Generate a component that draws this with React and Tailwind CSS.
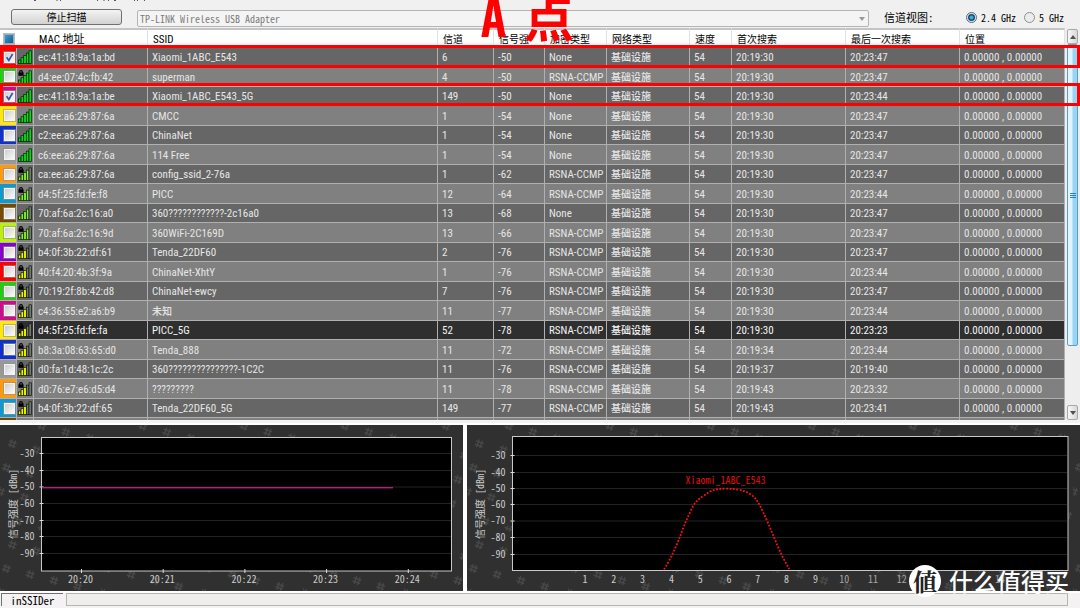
import { useState } from "react";

const columns = [
  { key: "mac", label: "MAC 地址", width: "w-[114px]", size: "text-[11px]" },
  { key: "ssid", label: "SSID", width: "w-[290px]", size: "text-[11px]" },
  { key: "channel", label: "信道", width: "w-[56px]" },
  { key: "rssi", label: "信号强", width: "w-[51px]" },
  { key: "security", label: "加密类型", width: "w-[62px]" },
  { key: "type", label: "网络类型", width: "w-[83px]" },
  { key: "speed", label: "速度", width: "w-[42px]" },
  { key: "first", label: "首次搜索", width: "w-[114px]" },
  { key: "last", label: "最后一次搜索", width: "w-[114px]" },
  { key: "location", label: "位置", width: "w-[105px]" },
];

// color, mac, ssid, channel, rssi, secured, first seen, last seen
const networks = [
  ["bg-[#ff0000]", "ec:41:18:9a:1a:bd", "Xiaomi_1ABC_E543", 6, -50, false, "20:19:30", "20:23:47"],
  ["bg-[#22cc11]", "d4:ee:07:4c:fb:42", "superman", 4, -50, true, "20:19:30", "20:23:47"],
  ["bg-[#cc0c8c]", "ec:41:18:9a:1a:be", "Xiaomi_1ABC_E543_5G", 149, -50, false, "20:19:30", "20:23:44"],
  ["bg-[#ffe60c]", "ce:ee:a6:29:87:6a", "CMCC", 1, -54, false, "20:19:30", "20:23:47"],
  ["bg-[#1130cc]", "c2:ee:a6:29:87:6a", "ChinaNet", 1, -54, false, "20:19:30", "20:23:47"],
  ["bg-[#999999]", "c6:ee:a6:29:87:6a", "114 Free", 1, -54, false, "20:19:30", "20:23:47"],
  ["bg-[#ff9911]", "ca:ee:a6:29:87:6a", "config_ssid_2-76a", 1, -62, true, "20:19:30", "20:23:47"],
  ["bg-[#1199cc]", "d4:5f:25:fd:fe:f8", "PICC", 12, -64, true, "20:19:30", "20:23:44"],
  ["bg-[#774a00]", "70:af:6a:2c:16:a0", "360????????????-2c16a0", 13, -68, false, "20:19:30", "20:23:47"],
  ["bg-[#bbee11]", "70:af:6a:2c:16:9d", "360WiFi-2C169D", 13, -66, true, "20:19:30", "20:23:47"],
  ["bg-[#8800cc]", "b4:0f:3b:22:df:61", "Tenda_22DF60", 2, -76, true, "20:19:30", "20:23:47"],
  ["bg-[#ff0000]", "40:f4:20:4b:3f:9a", "ChinaNet-XhtY", 1, -76, true, "20:19:30", "20:23:44"],
  ["bg-[#22cc11]", "70:19:2f:8b:42:d8", "ChinaNet-ewcy", 7, -76, true, "20:19:30", "20:23:47"],
  ["bg-[#cc0c8c]", "c4:36:55:e2:a6:b9", "未知", 11, -77, true, "20:19:30", "20:23:44"],
  ["bg-[#ffe60c]", "d4:5f:25:fd:fe:fa", "PICC_5G", 52, -78, true, "20:19:30", "20:23:23"],
  ["bg-[#1130cc]", "b8:3a:08:63:65:d0", "Tenda_888", 11, -72, true, "20:19:34", "20:23:44"],
  ["bg-[#999999]", "d0:fa:1d:48:1c:2c", "360???????????????-1C2C", 11, -76, true, "20:19:37", "20:19:40"],
  ["bg-[#ff9911]", "d0:76:e7:e6:d5:d4", "?????????", 11, -78, true, "20:19:43", "20:23:32"],
  ["bg-[#1199cc]", "b4:0f:3b:22:df:65", "Tenda_22DF60_5G", 149, -77, true, "20:19:43", "20:23:41"],
].map(([color, mac, ssid, channel, rssi, secured, first, last]) => ({
  color,
  mac,
  ssid,
  channel,
  rssi,
  secured,
  security: secured ? "RSNA-CCMP" : "None",
  type: "基础设施",
  speed: 54,
  first,
  last,
  location: "0.00000 , 0.00000",
}));

const cell = "border-r border-b border-[#b0b0b0] p-0";

function SignalIcon({ rssi, secured }) {
  const level = rssi >= -60 ? 5 : rssi >= -70 ? 4 : 3;
  const color = rssi >= -60 ? "#00dd11" : rssi >= -70 ? "#88ee22" : "#f4f400";
  return (
    <svg viewBox="0 0 14 14" className="mx-auto block h-[14px] w-[14px]" aria-hidden="true">
      {[0, 1, 2, 3, 4].map((i) => {
        const height = 3.4 + i * 2.3;
        return (
          <rect
            key={i}
            x={0.4 + i * 2.65}
            y={13.4 - height}
            width="2.6"
            height={height}
            fill={i < level ? color : "#777777"}
            stroke="#0a1a0a"
            strokeWidth="0.7"
          />
        );
      })}
      {secured && (
        <g>
          <path d="M1.6 3V2a1.4 1.4 0 0 1 2.8 0v1" fill="none" stroke="#000" strokeWidth="1.1" />
          <rect x="0.4" y="2.4" width="5.2" height="3.4" fill="#000" />
        </g>
      )}
    </svg>
  );
}

function RowCheckbox({ label, checked, onChange }) {
  return (
    <label className="relative ml-1 block h-[11px] w-[11px]">
      <input
        type="checkbox"
        aria-label={label}
        checked={checked}
        onChange={onChange}
        className="block h-[11px] w-[11px] appearance-none border border-[#f4f4f4] bg-linear-to-br from-[#cfcfcf] to-[#fafafa] outline outline-[#8e8f8f]/60"
      />
      {checked && (
        <svg viewBox="0 0 11 11" className="pointer-events-none absolute inset-0" aria-hidden="true">
          <path d="M2.6 5.2 4.8 8.4 8.6 2" fill="none" stroke="#3a4fa8" strokeWidth="1.6" />
        </svg>
      )}
    </label>
  );
}

function Toolbar() {
  const [band, setBand] = useState("2.4");
  const radio =
    "h-[11px] w-[11px] appearance-none rounded-full border border-[#8e8f8f] bg-[#ececec] checked:border-[#5a6b78] checked:bg-radial checked:from-[#35b0e8] checked:from-20% checked:via-[#123a5c] checked:via-45% checked:to-[#e4edf3] checked:to-65%";
  return (
    <header className="relative flex h-7 items-end bg-[#f0f0f0] pr-4 pl-[11px]">
      <svg viewBox="0 0 120 2" className="absolute top-0 left-[30px] h-[2px] w-[120px]" aria-hidden="true">
        <path d="M4 .5h2M26.500 .5h1M30 .5h1M67 .5h1M73.500 .5h1M78 .5h1M84 .5h2M104 .5h1M107 .5h1M114 .5h1" stroke="#555555" />
      </svg>
      <button
        type="button"
        className="mb-[3px] h-4 w-[111px] rounded-[3px] border border-[#707070] bg-linear-to-b from-[#f4f4f4] to-[#d2d2d2] text-[10px] leading-3 text-black"
      >
        停止扫描
      </button>
      <div className="relative mb-[1px] ml-[15px] grow">
        <select
          aria-label="Adapter"
          disabled
          className="block h-[17px] w-full appearance-none rounded-[2px] border border-[#b4b4b4] bg-[#f4f4f4] px-[2px] font-['Noto_Sans_Mono_CJK_SC','Noto_Sans_CJK_SC',monospace] text-[10px] leading-[15px] text-[#7c7c7c] opacity-100"
        >
          <option>TP-LINK Wireless USB Adapter</option>
        </select>
        <svg viewBox="0 0 6 4" className="pointer-events-none absolute top-[7px] right-1 h-1 w-[6px]" aria-hidden="true">
          <path d="M0 0h6L3 4z" fill="#9a9a9a" />
        </svg>
      </div>
      <fieldset className="mb-[4px] ml-[15px] flex items-center font-['Noto_Sans_Mono_CJK_SC','Noto_Sans_CJK_SC',monospace] text-[10px] leading-[13px] text-black">
        <legend className="float-left w-[82px] text-[11px]">信道视图:</legend>
        <label className="flex items-center gap-1">
          <input type="radio" name="band" className={radio} checked={band === "2.4"} onChange={() => setBand("2.4")} />
          2.4 GHz
        </label>
        <label className="ml-2 flex items-center gap-1">
          <input type="radio" name="band" className={radio} checked={band === "5"} onChange={() => setBand("5")} />5 GHz
        </label>
      </fieldset>
    </header>
  );
}

function NetworkTable() {
  const [checked, setChecked] = useState([0, 2]);

  const toggle = (index) => {
    setChecked((prev) => (prev.includes(index) ? prev.filter((i) => i !== index) : [...prev, index]));
  };

  return (
    <table className="w-full table-fixed border-separate border-spacing-0 text-left font-['Roboto_Condensed',Roboto,'Noto_Sans_CJK_SC',sans-serif]">
      <thead>
        <tr className="h-5 bg-linear-to-b from-white from-60% to-[#eeeeee] text-black">
          <th className="w-[17px] border-t-2 border-[#c4c4c4] p-0">
            <input
              type="checkbox"
              aria-label="全选"
              className="ml-1 block h-[10px] w-[10px] appearance-none border border-[#8fb0c4] bg-linear-to-br from-[#3aa0d0] to-[#155a88] outline outline-[#8e8f8f]/60"
            />
          </th>
          <th className="w-[17px] border-t-2 border-[#c4c4c4] p-0" />
          {columns.map((col) => (
            <th
              key={col.key}
              className={`${col.width} ${col.size || "text-[10px]"} overflow-hidden border-t-2 border-r border-t-[#c4c4c4] border-r-[#e2e2e2] p-0 pt-[1px] pl-[5px] leading-4 font-normal whitespace-nowrap`}
            >
              {col.label}
            </th>
          ))}
        </tr>
      </thead>
      <tbody>
        {networks.map((net, index) => (
          <tr
            key={net.mac}
            className={
              net.mac === "d4:5f:25:fd:fe:fa"
                ? "h-[19px] bg-[#2f2f2f] text-[#f4f4f4]"
                : "h-[19px] bg-[#666666] text-[#e6e6e6] even:h-5 even:bg-[#808080]"
            }
          >
            <td className={`${cell} ${net.color}`}>
              <RowCheckbox label={net.ssid} checked={checked.includes(index)} onChange={() => toggle(index)} />
            </td>
            <td className={cell}>
              <SignalIcon rssi={net.rssi} secured={net.secured} />
            </td>
            {columns.map((col) => (
              <td
                key={col.key}
                className={`border-r border-b border-[#b0b0b0] ${col.key === "type" || net[col.key] === "未知" ? "text-[10px] font-medium" : "text-[11px]"} overflow-hidden p-0 pt-[2px] pl-1 leading-4 whitespace-nowrap`}
              >
                {net[col.key]}
              </td>
            ))}
          </tr>
        ))}
        <tr className="h-[2px] bg-[#808080]">
          <td className="border-r border-[#b0b0b0] bg-[#774a00] p-0" />
          <td className="border-r border-[#b0b0b0] p-0" />
          {columns.map((col) => (
            <td key={col.key} className="border-r border-[#b0b0b0] p-0" />
          ))}
        </tr>
      </tbody>
    </table>
  );
}

function Scrollbar() {
  const button =
    "flex h-[15px] w-full items-center justify-center rounded-[2px] border border-[#a8a8a8] bg-linear-to-r from-[#f8f8f8] to-[#d8d8d8]";
  return (
    <div className="flex w-[15px] shrink-0 flex-col bg-[#eeeeee] px-[2px] pt-[1px]">
      <button type="button" aria-label="Scroll up" className={button}>
        <svg viewBox="0 0 6 4" className="h-1 w-[6px]">
          <path d="M0 4h6L3 0z" fill="#505050" />
        </svg>
      </button>
      <div className="flex grow-[5] flex-col items-center justify-center gap-[1px] rounded-[2px] border border-[#5f9dbd] bg-linear-to-r from-[#dff4fd] from-40% to-[#98d4f5] to-60%">
        <span className="h-[1px] w-[6px] bg-[#2f7fa8]" />
        <span className="h-[1px] w-[6px] bg-[#2f7fa8]" />
        <span className="h-[1px] w-[6px] bg-[#2f7fa8]" />
      </div>
      <div className="grow" />
      <button type="button" aria-label="Scroll down" className={button}>
        <svg viewBox="0 0 6 4" className="h-1 w-[6px]">
          <path d="M0 0h6L3 4z" fill="#505050" />
        </svg>
      </button>
    </div>
  );
}

const hashes = Array.from({ length: 17 }, (_, k) => [(42 + (k * 404) / 17) % 101, (1 + (k * 101) / 17) % 101]);

function ChartBackground({ id, width }) {
  return (
    <>
      <defs>
        <pattern id={id} width="101" height="101" patternUnits="userSpaceOnUse">
          {hashes.map(([x, y]) => (
            <path
              key={x}
              transform={`translate(${x} ${y}) rotate(20)`}
              d="M-1.5-4v8M2-4v8M-4-1.6h8M-4 1.8h8"
              stroke="#484848"
              strokeWidth="1.3"
            />
          ))}
        </pattern>
      </defs>
      <rect width={width} height="166" fill="#303030" />
      <rect width={width} height="166" fill={`url(#${id})`} />
    </>
  );
}

const chartText = "font-['Noto_Sans_Mono_CJK_SC','Noto_Sans_CJK_SC',monospace] text-[10px]";

function YAxis({ x, right, ticks, labelX }) {
  return (
    <>
      {ticks.map((y, i) => (
        <g key={y}>
          <path d={`M${x} ${y}H${right}`} stroke="#232323" />
          <path d={`M${x - 2} ${y}h4`} stroke="#dddddd" />
          <text x={x - 7} y={y + 3} textAnchor="end" fill="#cccccc">
            {-30 - i * 10}
          </text>
        </g>
      ))}
      <text transform={`translate(${labelX} 79) rotate(-90)`} textAnchor="middle" fill="#cccccc">
        信号强度 [dBm]
      </text>
    </>
  );
}

function TimeGraph() {
  return (
    <svg viewBox="0 0 463 166" className={`block w-full ${chartText}`} role="img" aria-label="信号强度">
      <ChartBackground id="hash-time" width="463" />
      <rect x="41.5" y="12.5" width="410" height="133.5" fill="#000" stroke="#c8c8c8" />
      <YAxis x={41.5} right={451} ticks={[28.5, 45.5, 62, 78.5, 95.5, 111.5, 128.5]} labelX={17} />
      {["20:20", "20:21", "20:22", "20:23", "20:24"].map((time, i) => (
        <g key={time}>
          <path d={`M${81.5 + i * 81.7} 144v4`} stroke="#dddddd" />
          <text x={80.5 + i * 81.7} y="158" textAnchor="middle" fill="#cccccc">
            {time}
          </text>
        </g>
      ))}
      <rect x="42" y="62" width="351" height="1.4" fill="#b81c7c" />
    </svg>
  );
}

function ChannelGraph() {
  return (
    <svg viewBox="0 0 613 166" className={`block w-full ${chartText}`} role="img" aria-label="信道">
      <ChartBackground id="hash-channel" width="613" />
      <rect x="45.5" y="11.5" width="555.5" height="134" fill="#000" stroke="#c8c8c8" />
      <YAxis x={45.5} right={600} ticks={[30.5, 47.5, 63.5, 79.5, 96, 112.5, 129.5]} labelX={17} />
      {[1, 2, 3, 4, 5, 6, 7, 8, 9, 10, 11, 12].map((n) => (
        <text key={n} x={118 + (n - 1) * 28.8} y="158" textAnchor="middle" fill={n > 9 ? "#a4a4a4" : "#cccccc"}>
          {n}
        </text>
      ))}
      <text x="533" y="158" textAnchor="middle" fill="#a4a4a4">
        14
      </text>
      <path
        d="M197 144.3C200 140 203 134 205.3 129.3S211 117 213 111.7 218 98 220.3 93.3 225 82 228 78.3 232 74 236.3 71 244 65.5 248 64.7 255 63.7 259.7 63.7 267 63.9 271.3 64.7 279 66.5 283 69 288.5 73 291.3 77.7 297 89 299.7 95 304.5 106.5 307 112.3 312 124.5 314.7 130 320 140 322.3 144"
        fill="none"
        stroke="#ff1010"
        strokeWidth="1.8"
        strokeDasharray="1.8 1.6"
      />
      <text x="258.5" y="59" textAnchor="middle" fill="#e01010">
        Xiaomi_1ABC_E543
      </text>
    </svg>
  );
}

function Watermark() {
  return (
    <div className="absolute right-[11px] bottom-[11px] flex items-center gap-2 text-white">
      <span className="flex h-8 w-8 items-center justify-center rounded-full bg-white font-['Noto_Serif_CJK_SC','Noto_Sans_CJK_SC',serif] text-2xl leading-8 font-bold text-[#222222]">
        値
      </span>
      <span className="text-2xl leading-8 font-medium">什么值得买</span>
    </div>
  );
}

export default function App() {
  return (
    <div className="relative flex min-h-screen flex-col overflow-hidden bg-[#f4f2f2] font-['Noto_Sans_CJK_SC',sans-serif]">
      <Toolbar />

      <main className="flex grow flex-col">
        <section className="relative flex">
          <NetworkTable />
          <Scrollbar />
          <div className="pointer-events-none absolute inset-x-0 top-[17px] h-[23px] border-3 border-[#ff0000]" />
          <div className="pointer-events-none absolute inset-x-0 top-[55px] h-[23px] border-3 border-[#ff0000]" />
        </section>

        <section className="mt-[3px] grid grid-cols-[463fr_613fr] gap-1 border-y-2 border-white bg-white">
          <TimeGraph />
          <ChannelGraph />
        </section>
      </main>

      <footer className="flex h-[15px] gap-[3px] pr-3 pb-[2px] pl-[1px] text-black">
        <div className="w-[62px] border-t border-l border-[#707070] text-center font-['Noto_Sans_Mono_CJK_SC','Noto_Sans_CJK_SC',monospace] text-[11px] leading-[13px]">
          inSSIDer
        </div>
        <div className="grow border border-[#b4b4b4] bg-[#f0eded]" />
      </footer>

      <p className="pointer-events-none absolute top-[-10px] left-[481px] flex gap-[18px] font-['Noto_Sans_Mono_CJK_SC','Noto_Sans_CJK_SC',sans-serif] text-[50px] leading-[50px] font-bold text-[#ff0000]">
        <span>A</span>
        <span>点</span>
      </p>
      <Watermark />
    </div>
  );
}
